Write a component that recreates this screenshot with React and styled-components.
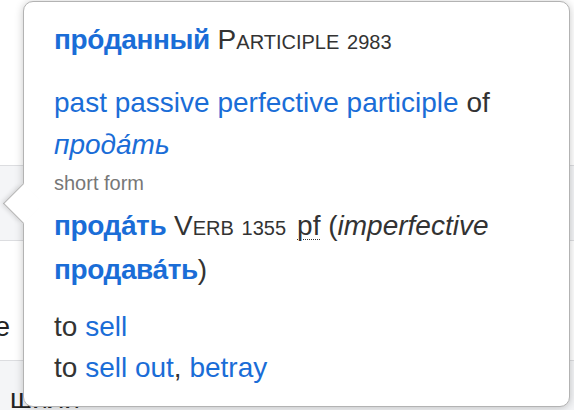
import React from 'react';
import styled, { createGlobalStyle } from 'styled-components';

const GlobalStyle = createGlobalStyle`
    body {
        margin: 0;
        background: #ffffff;
        font-family: "Liberation Sans", Arial, sans-serif;
        overflow: hidden;
    }
`;

const Page = styled.div`
    position: relative;
    width: 574px;
    height: 410px;
    overflow: hidden;
`;

const Backdrop = styled.div`
    display: flex;
    flex-direction: column;
    font-size: 28px;
    color: #222;
`;

const Row = styled.div`
    display: flex;
    align-items: ${props => props.align || 'center'};
    height: ${props => props.height}px;
    background: ${props => (props.shaded ? '#f4f5f7' : '#ffffff')};
    border-top: ${props => (props.lined ? '1px solid #dcdde0' : 'none')};
    box-sizing: border-box;
`;

const Clip = styled.div`
    display: flex;
    justify-content: flex-end;
    width: ${props => props.width}px;
    overflow: hidden;
    white-space: nowrap;
    padding-top: ${props => props.offset || 0}px;
`;

const Card = styled.div`
    position: absolute;
    top: 1px;
    left: 23px;
    width: 547px;
    height: 406px;
    box-sizing: border-box;
    padding: 17px 30px;
    background: #ffffff;
    border: 1px solid #b3b3b3;
    border-radius: 10px;
    box-shadow: 0 1px 9px rgba(0, 0, 0, 0.22);
    font-size: 28px;
    line-height: 42px;
    color: #333333;
`;

const Arrow = styled.div`
    position: absolute;
    left: -15px;
    top: 187px;
    width: 28px;
    height: 28px;
    background: #ffffff;
    border-left: 1px solid #b3b3b3;
    border-bottom: 1px solid #b3b3b3;
    transform: rotate(45deg);
    box-shadow: -3px 3px 5px -2px rgba(0, 0, 0, 0.15);
`;

const Block = styled.div`
    margin-top: ${props => props.gap || 0}px;
    line-height: ${props => props.lh || 42}px;
`;

const Headword = styled.a`
    color: #1a6dd7;
    font-weight: bold;
    letter-spacing: -0.4px;
    text-decoration: none;
`;

const Link = styled.a`
    color: #1a6dd7;
    text-decoration: none;
    font-style: ${props => (props.italic ? 'italic' : 'normal')};
`;

const Pos = styled.span`
    font-variant: small-caps;
    color: #333333;
`;

const Rank = styled.span`
    font-size: 20px;
    font-variant: normal;
`;

const Label = styled.div`
    margin: 2px 0 7px;
    font-size: 20px;
    line-height: 30px;
    color: #777777;
`;

const Aspect = styled.abbr`
    margin-left: 11px;
    text-decoration: underline dotted 1px;
    text-underline-offset: 4px;
`;

const Sense = styled.div``;

const App = () => (
    <>
        <GlobalStyle />
        <Page>
            <Backdrop>
                <Row height={165} />
                <Row height={75} shaded lined />
                <Row height={120} lined align="flex-start">
                    <Clip width={10} offset={70}>
                        <span>сле</span>
                    </Clip>
                </Row>
                <Row height={60} shaded lined align="flex-start">
                    <Clip width={80} offset={22}>
                        <span>шили</span>
                    </Clip>
                </Row>
            </Backdrop>
            <Card>
                <Arrow />
                <Block>
                    <Headword>про́данный</Headword> <Pos>Participle <Rank>2983</Rank></Pos>
                </Block>
                <Block gap={19}>
                    <Link>past passive perfective participle</Link> of
                    <br />
                    <Link italic>прода́ть</Link>
                </Block>
                <Label>short form</Label>
                <Block>
                    <Headword>прода́ть</Headword> <Pos>Verb <Rank>1355</Rank></Pos>
                    <Aspect title="perfective">pf</Aspect> (<i>imperfective</i>{' '}
                    <Headword>продава́ть</Headword>)
                </Block>
                <Block gap={15} lh={41}>
                    <Sense>to <Link>sell</Link></Sense>
                    <Sense>to <Link>sell out</Link>, <Link>betray</Link></Sense>
                </Block>
            </Card>
        </Page>
    </>
);

export default App;
